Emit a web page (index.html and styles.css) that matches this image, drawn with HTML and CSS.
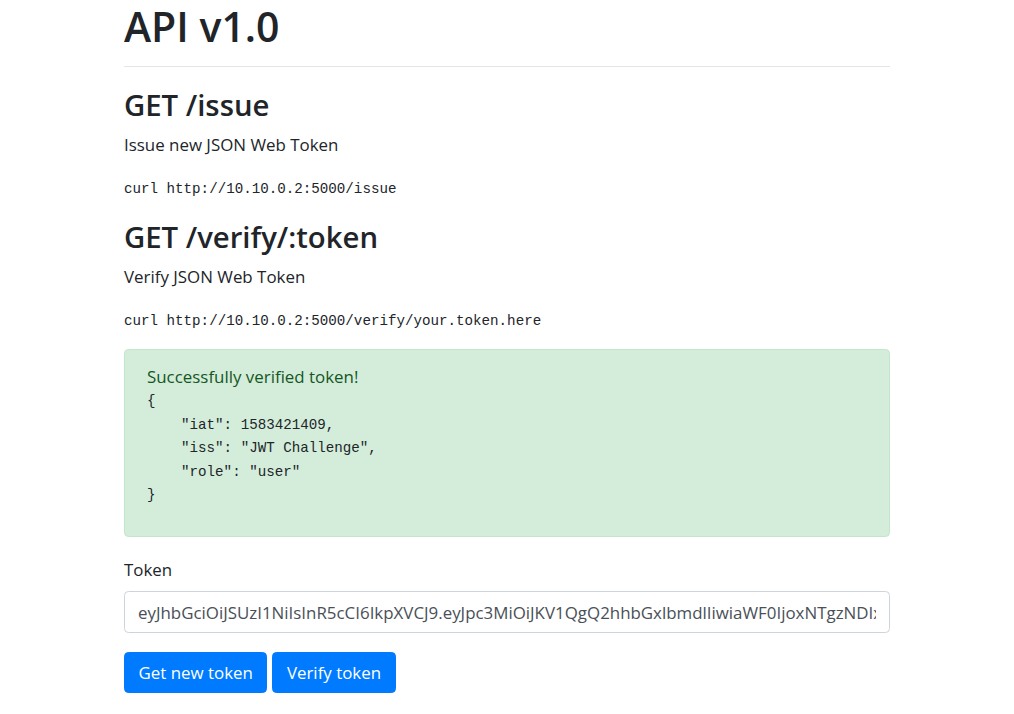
FILE: index.html
```html
<!DOCTYPE html>
<html lang="en">
<head>
<meta charset="utf-8">
<title>API v1.0</title>
<link rel="stylesheet" href="styles.css">
</head>
<body>
<main class="container">
  <h1 class="title">API v1.0</h1>
  <hr class="rule">
  <h3 class="endpoint">GET /issue</h3>
  <p class="desc">Issue new JSON Web Token</p>
  <p class="cmd"><code>curl http://10.10.0.2:5000/issue</code></p>
  <h3 class="endpoint">GET /verify/:token</h3>
  <p class="desc">Verify JSON Web Token</p>
  <p class="cmd cmd-last"><code>curl http://10.10.0.2:5000/verify/your.token.here</code></p>
  <div class="alert">
    <div class="alert-msg">Successfully verified token!</div>
<pre class="json">{
    "iat": 1583421409,
    "iss": "JWT Challenge",
    "role": "user"
}</pre>
  </div>
  <form class="token-form">
    <label class="label" for="token">Token</label>
    <input class="input" id="token" type="text" value="eyJhbGciOiJSUzI1NiIsInR5cCI6IkpXVCJ9.eyJpc3MiOiJKV1QgQ2hhbGxlbmdlIiwiaWF0IjoxNTgzNDIxNDA5LCJyb2xlIjoidXNlciJ9.signature">
    <div class="actions">
      <button class="btn" type="button">Get new token</button>
      <button class="btn" type="button">Verify token</button>
    </div>
  </form>
</main>
</body>
</html>
```

FILE: styles.css
```css
* { box-sizing: border-box; }
html, body { margin: 0; padding: 0; background: #fff; }
body {
  font-family: "Open Sans", "Noto Sans", sans-serif;
  font-size: 16.9px;
  line-height: 1.5;
  color: #212529;
}
.container {
  width: 766px;
  margin: 0 auto;
}
.title {
  margin: 0;
  font-size: 41px;
  font-weight: 600;
  line-height: 52px;
}
.rule {
  margin: 14px 0 20px;
  border: 0;
  border-top: 1px solid rgba(0,0,0,.1);
}
.endpoint {
  margin: 0 0 8px;
  font-size: 29.3px;
  font-weight: 600;
  line-height: 37px;
}
.desc { margin: 0 0 16px; line-height: 26px; }
.cmd { margin: 0 0 17px; line-height: 26px; }
.cmd-last { margin-bottom: 15px; }
code, pre {
  font-family: "Liberation Mono", "DejaVu Sans Mono", monospace;
  font-size: 14.2px;
  color: #212529;
}
.alert {
  margin-top: 0;
  height: 188px;
  padding: 14px 22px;
  background: #d4edda;
  border: 1px solid #c3e6cb;
  border-radius: 4.4px;
  color: #155724;
}
.alert-msg { line-height: 26px; }
.json {
  margin: 0;
  line-height: 23.5px;
  color: #212529;
}
.token-form { margin-top: 20px; }
.label {
  display: block;
  line-height: 26px;
  margin-bottom: 8px;
}
.input {
  display: block;
  width: 100%;
  height: 42px;
  padding: 6px 13px;
  font-family: inherit;
  font-size: 16.9px;
  color: #495057;
  border: 1px solid #ced4da;
  border-radius: 4.4px;
  background: #fff;
}
.actions {
  display: flex;
  gap: 5px;
  margin-top: 19px;
}
.btn {
  height: 41px;
  padding: 0 13.5px;
  font-family: inherit;
  font-size: 16.9px;
  color: #fff;
  background: #007bff;
  border: 1px solid #007bff;
  border-radius: 4.4px;
}
```
